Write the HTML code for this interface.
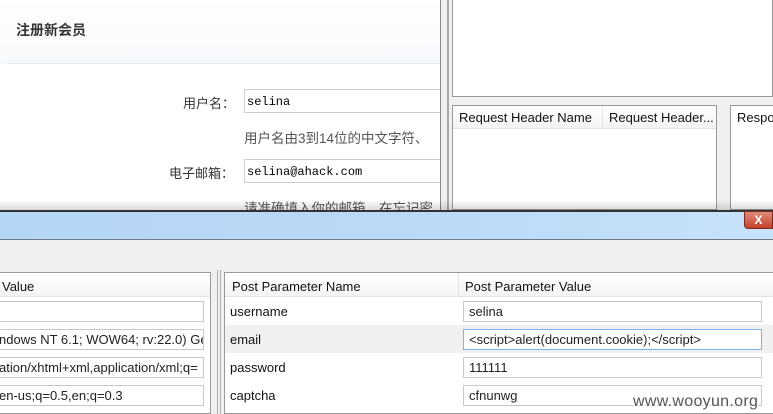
<!DOCTYPE html>
<html><head><meta charset="utf-8"><style>
*{margin:0;padding:0;box-sizing:border-box}
body{width:773px;height:414px;overflow:hidden;position:relative;background:#fff;font-family:"Liberation Sans","Noto Sans CJK SC",sans-serif}
.a{position:absolute}
.cn{font-family:"Liberation Sans","Noto Sans CJK SC",sans-serif}
.mono{font-family:"Liberation Mono","Noto Sans CJK SC",monospace;font-size:12px}
.inp{position:absolute;background:#fff;border:1px solid #c8c8c8;font-size:13px;padding-left:5px;line-height:19px;color:#222;white-space:nowrap;overflow:hidden}
.t{font-size:13px;color:#111;white-space:nowrap}
</style></head><body>
<div class="a" style="left:0;top:0;width:440px;height:64px;background:linear-gradient(#fff,#f6f9fc)"></div>
<div class="a cn" style="left:16px;top:20px;font-size:14px;font-weight:bold;color:#333">注册新会员</div>
<div class="a" style="left:8px;top:63px;width:432px;height:1px;background:#e8edf2"></div>
<div class="a cn" style="left:183px;top:93px;font-size:13px;color:#333">用户名：</div>
<div class="a mono" style="left:244px;top:89px;width:200px;height:24px;border:1px solid #ccc;padding:5px 0 0 2px">selina</div>
<div class="a cn" style="left:244px;top:127px;font-size:13.5px;color:#555">用户名由3到14位的中文字符、</div>
<div class="a cn" style="left:169px;top:163px;font-size:13px;color:#333">电子邮箱：</div>
<div class="a mono" style="left:244px;top:159px;width:200px;height:24px;border:1px solid #ccc;padding:5px 0 0 2px">selina@ahack.com</div>
<div class="a cn" style="left:244px;top:197px;font-size:13.5px;color:#555;height:13px;overflow:hidden">请准确填入你的邮箱，在忘记密</div>
<div class="a" style="left:440px;top:0;width:333px;height:210px;background:#f0f0f0;border-left:1px solid #888"></div>
<div class="a" style="left:447px;top:0;width:2px;height:210px;background:#aaa"></div>
<div class="a" style="left:452px;top:0;width:321px;height:97px;background:#fff;border:1px solid #999;border-top:none"></div>
<div class="a" style="left:452px;top:105px;width:265px;height:105px;background:#fff;border:1px solid #999"></div>
<div class="a" style="left:453px;top:106px;width:263px;height:23px;background:linear-gradient(#fff,#f1f3f5);border-bottom:1px solid #e3e3e3"></div>
<div class="a" style="left:602px;top:106px;width:1px;height:23px;background:#e3e3e3"></div>
<div class="a t" style="left:459px;top:110px">Request Header Name</div>
<div class="a t" style="left:609px;top:110px">Request Header...</div>
<div class="a" style="left:730px;top:105px;width:43px;height:105px;background:#fff;border:1px solid #999;border-right:none"></div>
<div class="a t" style="left:737px;top:110px">Respo</div>
<div class="a" style="left:0;top:200px;width:773px;height:10px;background:linear-gradient(rgba(0,0,0,0),rgba(0,0,0,0.15))"></div>
<div class="a" style="left:0;top:210px;width:773px;height:2px;background:#333"></div>
<div class="a" style="left:0;top:212px;width:773px;height:27px;background:linear-gradient(90deg,#b5d5f5,#bcdaf7 60%,#c8e2fa)"></div>
<div class="a" style="left:744px;top:211px;width:29px;height:18px;background:linear-gradient(#e08a7a,#c4402a);border:1px solid #7a2a20;border-radius:0 0 0 4px;color:#fff;font-weight:bold;font-size:12px;text-align:center;line-height:16px">X</div>
<div class="a" style="left:0;top:239px;width:773px;height:1px;background:#6b7b8b"></div>
<div class="a" style="left:0;top:240px;width:773px;height:174px;background:#f0f0f0"></div>
<div class="a" style="left:0;top:272px;width:211px;height:142px;background:#fff;border:1px solid #999;border-left:none"></div>
<div class="a" style="left:0;top:273px;width:210px;height:24px;background:linear-gradient(#fff,#f1f3f5);border-bottom:1px solid #e3e3e3"></div>
<div class="a t" style="left:2px;top:279px">Value</div>
<div class="inp" style="left:-2px;top:301px;width:206px;height:21px"></div>
<div class="inp" style="left:-2px;top:329px;width:206px;height:21px;padding-left:0">ndows NT 6.1; WOW64; rv:22.0) Gec</div>
<div class="inp" style="left:-2px;top:357px;width:206px;height:21px;padding-left:0">ation/xhtml+xml,application/xml;q=</div>
<div class="inp" style="left:-2px;top:385px;width:206px;height:21px;padding-left:0">en-us;q=0.5,en;q=0.3</div>
<div class="a" style="left:217px;top:270px;width:1px;height:144px;background:#aaa"></div>
<div class="a" style="left:220px;top:270px;width:1px;height:144px;background:#aaa"></div>
<div class="a" style="left:224px;top:272px;width:549px;height:142px;background:#fff;border:1px solid #999;border-right:none"></div>
<div class="a" style="left:225px;top:273px;width:548px;height:24px;background:linear-gradient(#fff,#f1f3f5);border-bottom:1px solid #e3e3e3"></div>
<div class="a" style="left:458px;top:273px;width:1px;height:24px;background:#e3e3e3"></div>
<div class="a t" style="left:232px;top:279px">Post Parameter Name</div>
<div class="a t" style="left:465px;top:279px">Post Parameter Value</div>
<div class="a" style="left:225px;top:325px;width:548px;height:28px;background:#f0f0f0"></div>
<div class="a t" style="left:230px;top:304px">username</div>
<div class="a t" style="left:230px;top:332px">email</div>
<div class="a t" style="left:230px;top:360px">password</div>
<div class="a t" style="left:230px;top:388px">captcha</div>
<div class="inp" style="left:463px;top:301px;width:299px;height:21px">selina</div>
<div class="inp" style="left:463px;top:329px;width:299px;height:21px;border-color:#7eb4ea">&lt;script&gt;alert(document.cookie);&lt;/script&gt;</div>
<div class="inp" style="left:463px;top:357px;width:299px;height:21px">111111</div>
<div class="inp" style="left:463px;top:385px;width:299px;height:21px">cfnunwg</div>
<div class="a" style="left:633px;top:393px;font-size:16px;color:#555;background:rgba(255,255,255,0.6);letter-spacing:0.3px">www.wooyun.org</div>
</body></html>
